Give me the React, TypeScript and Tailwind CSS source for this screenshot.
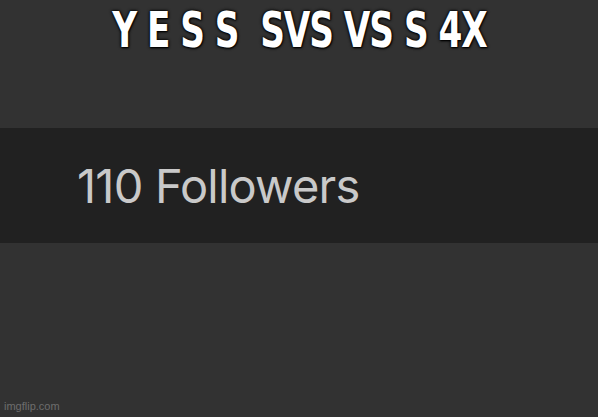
export default function App() {
  return (
    <div className="flex h-[417px] w-[598px] flex-col bg-[#323232]">
      <div className="flex h-[128px] justify-center pt-[5px]">
        {/* narrow impact-style caption, squeezed horizontally */}
        <h1
          className="origin-top scale-x-[0.7] font-['DejaVu_Sans',sans-serif] text-[49px] font-bold uppercase leading-[52px] tracking-[-1.5px] whitespace-nowrap text-white [text-shadow:0_0_4px_#000,0_0_3px_#000,1px_1px_2px_#000]"
        >
          Y E S S&nbsp; SVS VS S 4X
        </h1>
      </div>

      <div className="flex h-[115px] items-center bg-[#212121] pl-[77px]">
        <span className="font-['Inter',sans-serif] text-[47px] leading-none tracking-[-0.8px] text-[#c9c9c9]">
          110 Followers
        </span>
      </div>

      <div className="flex flex-1 items-end px-[4px] pb-[3px]">
        <span className="font-['Liberation_Sans',sans-serif] text-[11px] text-[#6d6d6d]">
          imgflip.com
        </span>
      </div>
    </div>
  );
}
